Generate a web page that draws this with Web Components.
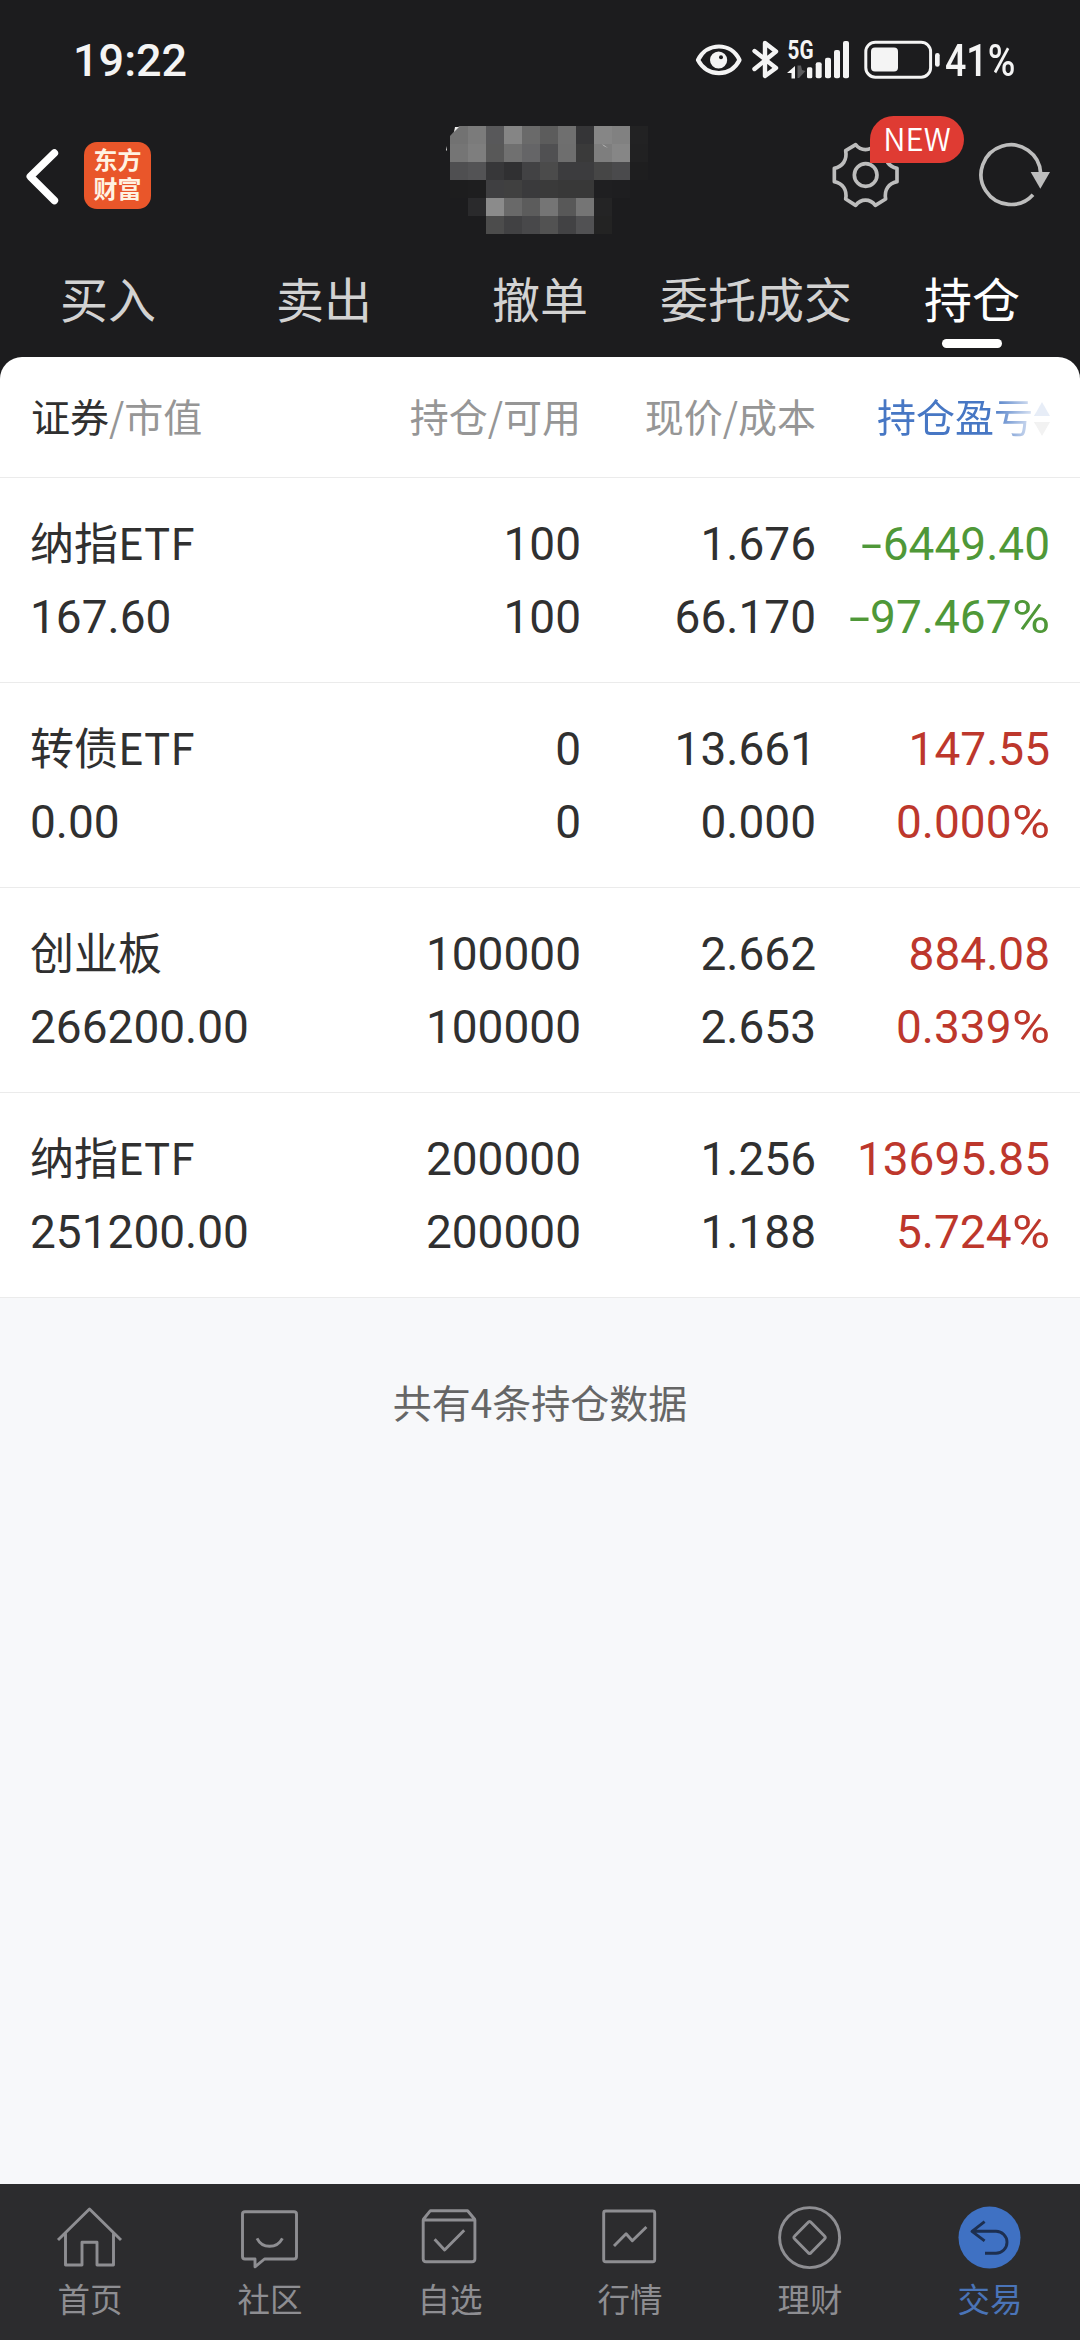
<!DOCTYPE html>
<html lang="zh-CN">
<head>
<meta charset="utf-8">
<title>持仓</title>
<style>
html,body{margin:0;padding:0;background:#f7f8fa}
body{width:1080px;height:2340px;overflow:hidden;font-family:"Noto Sans CJK SC",sans-serif}
</style>
</head>
<body>
<trade-app></trade-app>
<script>
const define = (name, css, html) => customElements.define(name, class extends HTMLElement {
  connectedCallback() {
    if (this.shadowRoot) return;
    const body = typeof html === 'function' ? html(this) : html;
    this.attachShadow({mode: 'open'}).innerHTML = `<style>*{box-sizing:border-box}${css}</style>${body}`;
  }
});

define('status-bar', `
:host{display:flex;height:96px;padding:0 60px 0 73px;color:#f4f4f4;font-family:Roboto,sans-serif}
time,.level{font-size:45px;font-weight:500;line-height:121px;height:96px}
.level{width:75px;transform:scaleX(.835);transform-origin:0 50%;white-space:nowrap}
svg{display:block;margin:26px 1px 0 auto}
`, `<time>19:22</time>
<svg width="252" height="70" viewBox="690 26 252 70" fill="#f4f4f4">
  <path d="M696 60C705 42 729 42 737.500 60C729 77.500 705 77.500 696 60Z" fill="none" stroke="#f4f4f4" stroke-width="4.200" stroke-linejoin="round"/>
  <circle cx="716.600" cy="60" r="8.600"/><circle cx="719" cy="57.200" r="2" fill="#1c1c1e"/>
  <path d="M752.500 51L774 68L763 76V43L774 51.500L752.500 69" fill="none" stroke="#f4f4f4" stroke-width="4.400" stroke-linejoin="round" stroke-linecap="round"/>
  <text x="785.500" y="59.300" font-size="25" font-weight="700" textLength="26" lengthAdjust="spacingAndGlyphs">5G</text>
  <path d="M793 66V78.500H789.500V73H785Z"/><path d="M795.500 65.500H799L800 70L803.500 71L797 78H795.500Z" fill="#59595b"/>
  <rect x="805" y="67.300" width="5.300" height="11" rx="1.500"/><rect x="813.700" y="62.300" width="6" height="16" rx="2"/>
  <rect x="823" y="57.700" width="6" height="20.600" rx="2"/><rect x="832" y="50" width="6" height="28.300" rx="2"/>
  <rect x="841" y="41" width="6" height="37.300" rx="2"/>
  <rect x="863.800" y="42.200" width="64.800" height="35" rx="9.500" fill="none" stroke="#f4f4f4" stroke-width="3"/>
  <rect x="869" y="47.400" width="27" height="24" rx="4"/>
  <rect x="933" y="53" width="4.700" height="13.700" rx="2.300"/>
</svg><span class="level">41%</span>`);

define('app-logo', `
:host{display:flex;flex-direction:column;align-items:center;width:67px;height:67px;border-radius:13px;background:#e9562a;color:#fff3e2;font-size:24px;font-weight:700;line-height:28.500px;padding-top:3px}
`, `<span>东方</span><span>财富</span>`);

const MOSAIC = [
  '727272 7b7b7b 58585a 858585 6a6a6a 5c5c5c 6f6f6f 353537 868686 818181 222223',
  '757575 7e7e7e 585858 707070 656567 505052 6e6e6e 3a3a3a 7e7e7e 868686 212122',
  '4f4f51 535355 373739 303032 424244 4b4b4b 3c3c3e 3c3c3e 464646 4a4a4c 1e1e1f',
  '1d1d1e 1e1e1f 3f3f41 404040 3a3a3c 3a3a3a 383838 383838 1f1f21 1e1e20 1c1c1e',
  '1c1c1e 2a2a2c 8b8b8b 696969 5c5c5c 757575 585858 757575 242425 1c1c1e 1c1c1e',
  '1c1c1e 1c1c1e 4c4c4c 414143 48484a 525252 424244 515153 232323 1c1c1e 1c1c1e'
].map(r => r.split(' '));

define('account-mosaic', `:host{display:block;width:204px;height:108px}svg{display:block}`,
  () => `<svg width="204" height="108" shape-rendering="crispEdges">${MOSAIC.map((r, y) =>
    r.map((c, x) => `<rect x="${x * 18 + 6}" y="${y * 18}" width="18" height="18" fill="#${c}"/>`).join('')).join('')}
    <g shape-rendering="auto"><path d="M6 0H15L6 10Z" fill="#1c1c1e"/><path d="M11 1H15L10 6Z" fill="#eee"/><path d="M3 20L2 24L3 25Z" fill="#ddd"/><path d="M158 18L164 22L160 20Z" fill="#ddd"/></g></svg>`);

define('title-bar', `
:host{display:grid;grid-template-columns:444px 204px 1fr;height:154px;align-items:start}
.left{display:flex;align-items:center;padding:46px 0 0 24px}
.left svg{margin-right:24px}
account-mosaic{margin-top:30px}
.right{display:flex;padding-top:44px;position:relative}
.right svg{display:block}
.badge{position:absolute;left:222px;top:20px;width:94px;height:47px;border-radius:23.500px 23.500px 23.500px 0;background:#df3b33;color:#fff;font-size:31px;line-height:44px;text-align:center;font-weight:350}
`, `<div class="left"><svg width="36" height="66" viewBox="24 142 36 66"><path d="M54.400 152L30.300 175.500L54.400 199.500" fill="none" stroke="#fff" stroke-width="7.500" stroke-linecap="round" stroke-linejoin="round"/></svg><app-logo></app-logo></div>
<account-mosaic></account-mosaic>
<div class="right">
<svg width="432" height="74" viewBox="-36 420 1296 222" fill="none" stroke="#bdbdbd" stroke-width="11">
<path d="M523 505C548 500 562 480 557 452L587 434C603 454 630 454 646 434L677 452C672 480 686 500 711 505V545C686 550 672 570 677 597L646 616C630 595 603 595 587 616L557 597C562 570 548 550 523 545Z" stroke-linejoin="round"/>
<circle cx="617" cy="525" r="34"/>
<path d="M1142 520A89.500 89.500 0 1 0 1119 584"/><path d="M1112 516H1170L1141 566Z" fill="#bdbdbd" stroke="none"/>
</svg><span class="badge">NEW</span></div>`);

define('nav-tab', `
:host{display:flex;flex-direction:column;align-items:center;flex:1;color:#d2d2d2;font-size:48px;line-height:94px}
:host([active]){color:#fff}
:host([active])::after{content:"";width:60px;height:9px;margin-top:-5px;border-radius:5px;background:#fff}
`, `<slot></slot>`);
define('tab-strip', `:host{display:flex;height:107px}`, `<slot></slot>`);

const COLS = 'display:grid;grid-template-columns:270px 280px 235px 234px;padding:0 30px 0 31px;';

define('table-head', `
:host{${COLS}height:121px;border-bottom:1px solid #ebebeb;background:#fff;border-radius:22px 22px 0 0;font-size:39px;line-height:116px;color:#969696;white-space:nowrap}
b{font-weight:400;color:#303030}
.r{text-align:right}
.sort{display:flex;justify-content:flex-end;align-items:flex-start;color:#4777c4;-webkit-mask:linear-gradient(90deg,#000 176px,rgba(0,0,0,.13) 220px);mask:linear-gradient(90deg,#000 176px,rgba(0,0,0,.13) 220px)}
svg{margin:45px 0 0 1px}
`, `<span><b>证券</b>/市值</span><span class="r">持仓/可用</span><span class="r">现价/成本</span>
<span class="sort">持仓盈亏<svg width="16" height="36"><path d="M8 0L16 14H0Z" fill="#4777c4"/><path d="M0 20H16L8 34Z" fill="#999"/></svg></span>`);

define('holding-row', `
:host{${COLS}height:205px;border-bottom:1px solid #ebebeb;background:#fff;color:#303030;white-space:nowrap}
div{display:flex;flex-direction:column}
.name{font-size:44px;line-height:72px;padding-top:27px;margin-left:-1px;color:#303030}
.n{font-family:Roboto,sans-serif;font-size:46px;font-weight:400;line-height:73px}
.name .n{line-height:80px}
.r{text-align:right;padding-top:30px}
.up{color:#bd372c}.down{color:#4f9838}
i{font-style:normal;display:inline-block;text-align:left}
.minus{width:21.500px;transform:scaleX(1.65);transform-origin:0 50%}
.pct{width:38.500px;transform:scaleX(1.13);transform-origin:0 50%}
`, e => {
  const [name, value, qty, avail, price, cost, pl, pct] = e.textContent.trim().split(/\s+/);
  const mark = s => s.replace('-', '<i class="minus">-</i>').replace('%', '<i class="pct">%</i>');
  const cell = (a, b, c = '') => `<div class="n r ${c}"><span>${mark(a)}</span><span>${mark(b)}</span></div>`;
  return `<div class="name"><span>${name}</span><span class="n">${value}</span></div>${cell(qty, avail)}${cell(price, cost)}${cell(pl, pct, pl[0] === '-' ? 'down' : 'up')}`;
});

const ICONS = {
  home: '<path d="M8 46L39.500 15L71 46M15.500 39V71H32V48.300H47V71H63.500V39"/>',
  chat: '<path d="M15 17.700H64Q66.500 17.700 66.500 20V62.500Q66.500 65 64 65H34.500L25 72.800V65H15Q12.500 65 12.500 62.500V20Q12.500 17.700 15 17.700Z"/><path d="M27 44.300Q31 52.300 39.600 52.300T52.400 44.300"/>',
  check: '<path d="M13.200 26H64.900V65Q64.900 67.700 62 67.700H16Q13.200 67.700 13.200 65ZM13.200 25.500L20.400 16.700H57.600L64.900 25.500"/><path d="M24.600 45.300L34.600 56L54.200 36.300"/>',
  chart: '<rect x="13.700" y="17" width="51" height="50.700" rx="2"/><path d="M24 52L36.100 39.800L42.300 46.800L56.400 33"/>',
  gem: '<circle cx="39.600" cy="43.600" r="30"/><path d="M38 28.500Q39.600 26.500 41.200 28.500L54.500 42Q56 43.500 54.500 45L41.200 58.500Q39.600 60.500 38 58.500L24.700 45Q23 43.500 24.700 42Z"/>',
  trade: '<circle cx="39.500" cy="43.600" r="31" fill="#3f71c3" stroke="none"/><path d="M34.600 27.700L22 37.300L34.600 46.800M22 37.300H46A11 11 0 0 1 46 59.300H35" stroke="#1d2f50"/>'
};
define('bottom-item', `
:host{display:flex;flex-direction:column;align-items:center;flex:1;color:#8e8e92;font-size:32.500px;line-height:44px;padding-top:10px}
:host([active]){color:#4a74b8}
svg{display:block;margin-bottom:2px}
`, e => `<svg width="80" height="80" fill="none" stroke="#8e8e92" stroke-width="2.900" stroke-linejoin="round">${ICONS[e.getAttribute('icon')]}</svg><slot></slot>`);
define('bottom-nav', `:host{display:flex;height:156px;background:#2c2c2e}`, `<slot></slot>`);

define('trade-app', `
:host{display:flex;flex-direction:column;width:1080px;height:2340px;background:#f7f8fa}
header{background:#1c1c1e}
.cap{background:#1c1c1e}
main{flex:1}
p{margin:0;padding-top:73px;text-align:center;font-size:39px;line-height:60px;color:#666}
`, `<header><status-bar></status-bar><title-bar></title-bar>
<tab-strip><nav-tab>买入</nav-tab><nav-tab>卖出</nav-tab><nav-tab>撤单</nav-tab><nav-tab>委托成交</nav-tab><nav-tab active>持仓</nav-tab></tab-strip></header>
<main><div class="cap"><table-head></table-head></div>
<holding-row>纳指ETF 167.60 100 100 1.676 66.170 -6449.40 -97.467%</holding-row>
<holding-row>转债ETF 0.00 0 0 13.661 0.000 147.55 0.000%</holding-row>
<holding-row>创业板 266200.00 100000 100000 2.662 2.653 884.08 0.339%</holding-row>
<holding-row>纳指ETF 251200.00 200000 200000 1.256 1.188 13695.85 5.724%</holding-row>
<p>共有4条持仓数据</p></main>
<bottom-nav><bottom-item icon="home">首页</bottom-item><bottom-item icon="chat">社区</bottom-item><bottom-item icon="check">自选</bottom-item><bottom-item icon="chart">行情</bottom-item><bottom-item icon="gem">理财</bottom-item><bottom-item icon="trade" active>交易</bottom-item></bottom-nav>`);
</script>
</body>
</html>
